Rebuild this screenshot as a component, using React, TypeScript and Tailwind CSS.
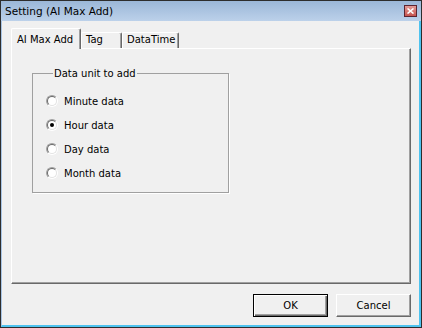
import React from 'react';

const body = { fontFamily: '"DejaVu Sans", Verdana, sans-serif' };

function Radio({ checked }: { checked?: boolean }) {
  return (
    <div className="w-[12px] h-[12px] rounded-full border border-t-[#a0a0a0] border-l-[#a0a0a0] border-r-white border-b-white shrink-0">
      <div className="w-full h-full rounded-full border border-t-[#696969] border-l-[#696969] border-r-[#e3e3e3] border-b-[#e3e3e3] bg-white flex items-center justify-center">
        {checked && <div className="w-[4px] h-[4px] rounded-full bg-black" />}
      </div>
    </div>
  );
}

const options = [
  { label: 'Minute data' },
  { label: 'Hour data', checked: true },
  { label: 'Day data' },
  { label: 'Month data' },
];

export default function App() {
  return (
    <div
      className="w-[422px] h-[328px] border border-[#2d2d2d] bg-[#f0f0f0] flex flex-col text-black text-[10px] leading-[13px]"
      style={body}
    >
      {/* title bar */}
      <div className="h-[20px] shrink-0 bg-gradient-to-b from-[#9bb7d8] to-[#bcd1ea] flex items-start pl-[4px] pr-[4px]">
        <span className="text-[10.5px] leading-[20px]">Setting (AI Max Add)</span>
        <div className="ml-auto mt-[4px] w-[13px] h-[12px] border border-[#5c2430] bg-gradient-to-b from-[#e39a96] to-[#c65450] flex items-center justify-center">
          <svg width="7" height="6" viewBox="0 0 7 6">
            <path d="M0.5 0.5 L6.5 5.5 M6.5 0.5 L0.5 5.5" stroke="#fff" strokeWidth="1.6" />
          </svg>
        </div>
      </div>

      {/* client */}
      <div className="flex-1 flex flex-col border-l border-l-[#a8c4e4] border-r-2 border-r-[#4ec3ef] border-b-2 border-b-[#4ec3ef] pl-[9px] pr-[8px] pt-[7px]">
        {/* tabs */}
        <div className="h-[20px] flex items-end">
          <div className="relative z-10 w-[70px] h-[21px] -mb-px bg-[#f0f0f0] border-l border-t border-r border-l-white border-t-white border-r-[#696969] rounded-t-[2px] shadow-[inset_-1px_0_0_#a0a0a0] pl-[5px] pt-[4px]">
            AI Max Add
          </div>
          <div className="w-[41px] h-[16px] border-l border-t border-r border-l-white border-t-white border-r-[#696969] rounded-t-[2px] shadow-[inset_-1px_0_0_#a0a0a0] pl-[4px]">
            Tag
          </div>
          <div className="w-[57px] h-[16px] border-l border-t border-r border-l-white border-t-white border-r-[#696969] rounded-t-[2px] shadow-[inset_-1px_0_0_#a0a0a0] pl-[4px]">
            DataTime
          </div>
        </div>

        {/* panel */}
        <div className="w-[400px] h-[236px] border border-t-white border-l-white border-r-[#696969] border-b-[#696969] shadow-[inset_-1px_-1px_0_#a0a0a0] pl-[20px] pt-[18px]">
          <fieldset className="w-[197px] border border-[#a0a0a0] shadow-[1px_1px_0_#fff] pl-[13px] pt-[9px] pb-[7px]">
            <legend className="ml-[7px] px-[1px] leading-[13px]">Data unit to add</legend>
            {options.map((o) => (
              <div key={o.label} className="h-[24px] flex items-center gap-[6px]">
                <Radio checked={o.checked} />
                <span>{o.label}</span>
              </div>
            ))}
          </fieldset>
        </div>

        {/* buttons */}
        <div className="mt-[10px] flex justify-end gap-[8px] w-[400px]">
          <button className="w-[75px] h-[23px] border border-black bg-[#f0f0f0] shadow-[inset_1px_1px_0_#fff,inset_-1px_-1px_0_#696969,inset_-2px_-2px_0_#a0a0a0]">
            OK
          </button>
          <button className="w-[75px] h-[23px] bg-[#f0f0f0] border border-t-white border-l-white border-r-[#696969] border-b-[#696969] shadow-[inset_-1px_-1px_0_#a0a0a0]">
            Cancel
          </button>
        </div>
      </div>
    </div>
  );
}
